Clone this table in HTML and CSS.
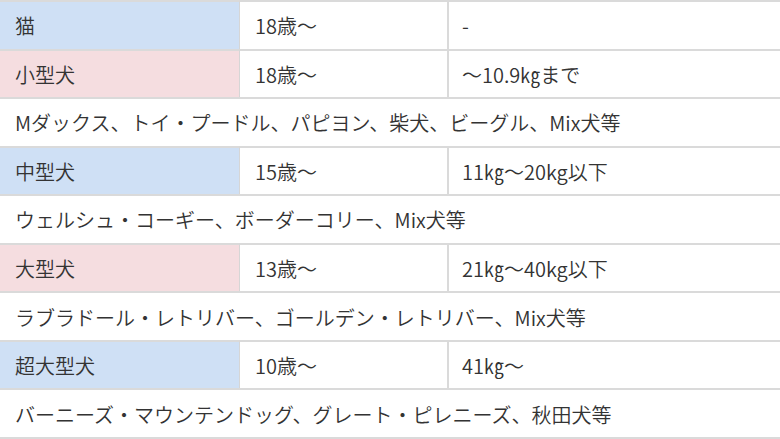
FILE: index.html
```html
<!DOCTYPE html>
<html lang="ja">
<head>
<meta charset="utf-8">
<link rel="stylesheet" href="styles.css">
</head>
<body>
<div class="table">
  <div class="cell kind blue">猫</div>
  <div class="cell age">18歳～</div>
  <div class="cell weight">-</div>

  <div class="cell kind pink">小型犬</div>
  <div class="cell age">18歳～</div>
  <div class="cell weight">～10.9㎏まで</div>

  <div class="cell wide">Mダックス、トイ・プードル、パピヨン、柴犬、ビーグル、Mix犬等</div>

  <div class="cell kind blue">中型犬</div>
  <div class="cell age">15歳～</div>
  <div class="cell weight">11㎏～20kg以下</div>

  <div class="cell wide">ウェルシュ・コーギー、ボーダーコリー、Mix犬等</div>

  <div class="cell kind pink">大型犬</div>
  <div class="cell age">13歳～</div>
  <div class="cell weight">21㎏～40kg以下</div>

  <div class="cell wide">ラブラドール・レトリバー、ゴールデン・レトリバー、Mix犬等</div>

  <div class="cell kind blue">超大型犬</div>
  <div class="cell age">10歳～</div>
  <div class="cell weight">41㎏～</div>

  <div class="cell wide">バーニーズ・マウンテンドッグ、グレート・ピレニーズ、秋田犬等</div>
</div>
</body>
</html>
```

FILE: styles.css
```css
html, body {
  margin: 0;
  padding: 0;
  background: #ffffff;
}

.table {
  display: grid;
  grid-template-columns: 240px 209px 1fr;
  grid-template-rows: repeat(9, 1fr);
  height: 437px;
  border-bottom: 2px solid #dadada;
  font-family: "Noto Sans CJK JP", "Noto Sans", sans-serif;
  font-size: 20px;
  font-weight: 350;
  color: #333333;
}

.cell {
  display: flex;
  align-items: center;
  border-top: 2px solid #dadada;
  padding: 2px 0 0 15px;
  line-height: 1;
}

.kind {
  border-right: 1px solid #d6d6d6;
}

.age {
  border-right: 2px solid #dadada;
}

.weight {
  padding-left: 13px;
}

.wide {
  grid-column: 1 / -1;
}

.blue {
  background: #cfe0f5;
}

.pink {
  background: #f5dde0;
}
```
